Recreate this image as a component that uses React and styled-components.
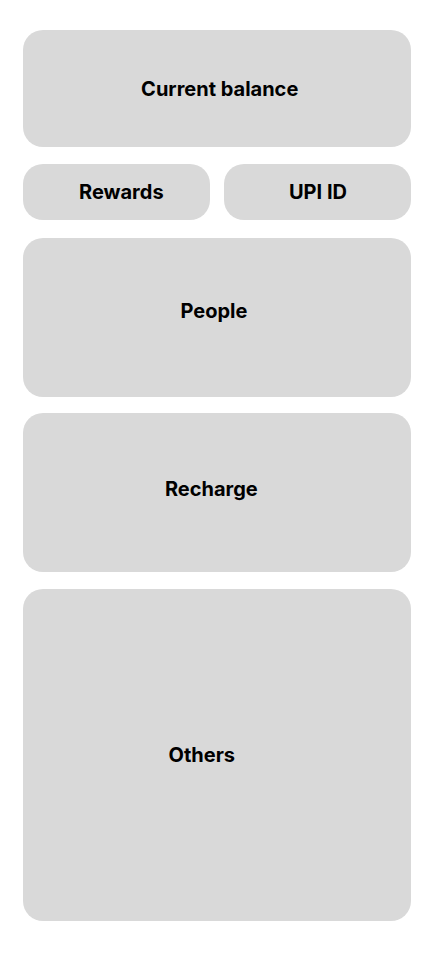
import React from 'react'
import styled, { createGlobalStyle } from 'styled-components'

const GlobalStyle = createGlobalStyle`
  * {
    box-sizing: border-box;
  }
  body {
    margin: 0;
    background: #ffffff;
    font-family: Inter, 'Liberation Sans', sans-serif;
  }
`

const pad = ({ $dx = 0, $dy = 0 }) =>
  `${Math.max(0, 2 * $dy)}px ${Math.max(0, -2 * $dx)}px ${Math.max(
    0,
    -2 * $dy
  )}px ${Math.max(0, 2 * $dx)}px`

const App = () => (
  <>
    <GlobalStyle />
    <Page>
      <Card $h={117} $dx={2.7}>
        <Label>Current balance</Label>
      </Card>
      <Row>
        <Card $h={56} $dx={4.8}>
          <Label>Rewards</Label>
        </Card>
        <Card $h={56} $dx={0.5}>
          <Label>UPI ID</Label>
        </Card>
      </Row>
      <Card $h={159} $dx={-3} $dy={-6.8} $mt={1}>
        <Label>People</Label>
      </Card>
      <Card $h={159} $dx={-5.7} $dy={-3.3} $mt={-1}>
        <Label>Recharge</Label>
      </Card>
      <Card $h={332} $dx={-15.2}>
        <Label>Others</Label>
      </Card>
    </Page>
  </>
)

export default App

const Page = styled.main`
  width: 388px;
  margin: 30px 0 0 23px;
  display: flex;
  flex-direction: column;
  gap: 17px;
`
const Row = styled.div`
  display: grid;
  grid-template-columns: 1fr 1fr;
  gap: 14px;
`
const Card = styled.section`
  height: ${p => p.$h}px;
  margin-top: ${p => p.$mt || 0}px;
  padding: ${pad};
  background: #d9d9d9;
  border-radius: 20px;
  display: flex;
  align-items: center;
  justify-content: center;
`
const Label = styled.span`
  font-size: 20px;
  line-height: 24px;
  font-weight: 700;
  color: #000000;
`
